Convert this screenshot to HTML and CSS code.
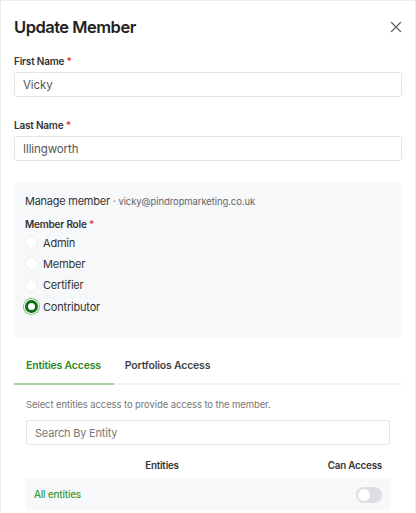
FILE: index.html
```html
<!DOCTYPE html>
<html>
<head>
<meta charset="utf-8">
<link rel="stylesheet" href="styles.css">
</head>
<body>
<div class="modal">
  <div class="header">
    <h1 class="title">Update Member</h1>
    <button class="close" aria-label="Close">
      <svg width="12" height="12" viewBox="0 0 12 12"><path d="M1.5 1.5L10.5 10.5M10.5 1.5L1.5 10.5" stroke="#5f6368" stroke-width="1.3" stroke-linecap="round"/></svg>
    </button>
  </div>
  <div class="body">
    <div class="field">
      <label class="label">First Name <span class="req">*</span></label>
      <div class="input">Vicky</div>
    </div>
    <div class="field">
      <label class="label">Last Name <span class="req">*</span></label>
      <div class="input">Illingworth</div>
    </div>
    <div class="panel">
      <div class="manage">Manage member <span class="dot">·</span> <span class="email">vicky@pindropmarketing.co.uk</span></div>
      <div class="label role-label">Member Role <span class="req">*</span></div>
      <div class="radios">
        <div class="radio"><span class="circle"></span>Admin</div>
        <div class="radio"><span class="circle"></span>Member</div>
        <div class="radio"><span class="circle"></span>Certifier</div>
        <div class="radio"><span class="circle checked"></span>Contributor</div>
      </div>
    </div>
    <div class="tabs">
      <div class="tab active">Entities Access</div>
      <div class="tab">Portfolios Access</div>
    </div>
    <div class="tab-content">
      <p class="hint">Select entities access to provide access to the member.</p>
      <div class="input search">Search By Entity</div>
      <div class="table">
        <div class="thead">
          <div class="th th-entities">Entities</div>
          <div class="th th-access">Can Access</div>
        </div>
        <div class="trow">
          <div class="td-name">All entities</div>
          <div class="td-access"><span class="toggle"><span class="knob"></span></span></div>
        </div>
      </div>
    </div>
  </div>
</div>
</body>
</html>
```
FILE: styles.css
```css
* { box-sizing: border-box; }
html, body { margin: 0; padding: 0; background: #fff; }
body {
  font-family: Inter, "Noto Sans", "Liberation Sans", sans-serif;
  color: #2b2b2b;
}
.modal {
  width: 416px;
  height: 513px;
  overflow: hidden;
  border-top: 1px solid #ececec;
  border-left: 1px solid #ececec;
  border-right: 1px solid #ececec;
}
.header {
  display: flex;
  justify-content: space-between;
  align-items: center;
  padding: 13px 12px 0 13px;
  height: 39px;
}
.title {
  margin: 0;
  font-size: 16.5px;
  font-weight: 600;
  line-height: 26px;
  letter-spacing: -0.5px;
  color: #222;
}
.close {
  border: 0;
  background: none;
  padding: 0;
  width: 14px;
  height: 14px;
  display: flex;
  align-items: center;
  justify-content: center;
}
.body { padding: 0 13px; }
.field { margin-top: 14px; }
.field + .field { margin-top: 21px; }
.label {
  display: block;
  font-size: 10px;
  font-weight: 600;
  line-height: 14px;
  letter-spacing: -0.2px;
  color: #333;
}
.req { color: #e53935; }
.input {
  margin-top: 4px;
  height: 25px;
  border: 1px solid #e2e4e7;
  border-radius: 3px;
  padding: 0 8px;
  display: flex;
  align-items: center;
  font-size: 11.5px;
  letter-spacing: -0.1px;
  color: #555;
}
.panel {
  margin-top: 21px;
  background: #f7f8fa;
  border-radius: 4px;
  padding: 11px 11px 20px;
}
.manage {
  font-size: 11px;
  line-height: 16px;
  letter-spacing: -0.25px;
  color: #333;
}
.dot { color: #777; }
.email { font-size: 9.5px; letter-spacing: -0.1px; color: #666; }
.role-label { margin-top: 7px; }
.radios { margin-top: 1px; display: flex; flex-direction: column; }
.radio {
  height: 21.3px;
  display: flex;
  align-items: center;
  gap: 5px;
  font-size: 11px;
  letter-spacing: -0.2px;
  color: #333;
}
.circle {
  width: 13px;
  height: 13px;
  border-radius: 50%;
  background: #fff;
  border: 1px solid #ebebeb;
  flex: none;
}
.circle.checked {
  border: 3px solid #0d6b14;
  box-shadow: 0 0 0 1px #fff, 0 0 0 2px #7fbf7f;
}
.tabs {
  margin-top: 11px;
  display: flex;
  border-bottom: 2px solid #f4f4f4;
}
.tab {
  padding: 10px 12px 10px 12px;
  font-size: 10.5px;
  font-weight: 600;
  line-height: 15px;
  letter-spacing: -0.2px;
  color: #444;
  margin-bottom: -2px;
  border-bottom: 2px solid transparent;
}
.tab.active {
  color: #2a8a2a;
  border-bottom-color: #a9d3a9;
  padding-right: 13px;
}
.tab + .tab { padding-left: 11px; }
.tab-content { padding: 0 12px; }
.hint {
  margin: 13px 0 0;
  font-size: 9.5px;
  line-height: 14px;
  letter-spacing: -0.1px;
  color: #777;
}
.search {
  margin-top: 8px;
  height: 25px;
  font-size: 11px;
  letter-spacing: -0.2px;
  color: #777;
}
.thead {
  display: grid;
  grid-template-columns: 272px 1fr;
  padding-top: 14px;
  padding-bottom: 5px;
}
.th {
  font-size: 9.8px;
  font-weight: 600;
  line-height: 14px;
  letter-spacing: -0.2px;
  color: #333;
}
.th-entities { text-align: center; }
.th-access { text-align: right; padding-right: 8px; }
.trow {
  display: grid;
  grid-template-columns: 272px 1fr;
  align-items: center;
  height: 33px;
  background: #f7f8fa;
}
.td-name {
  padding-left: 8px;
  font-size: 9.8px;
  font-weight: 500;
  letter-spacing: -0.15px;
  color: #3a973a;
}
.td-access {
  display: flex;
  justify-content: flex-end;
  padding-right: 8px;
}
.toggle {
  width: 26px;
  height: 16px;
  border-radius: 8px;
  background: #dcdee2;
  display: flex;
  align-items: center;
  padding: 2px;
}
.knob {
  width: 12px;
  height: 12px;
  border-radius: 50%;
  background: #fff;
}
```
